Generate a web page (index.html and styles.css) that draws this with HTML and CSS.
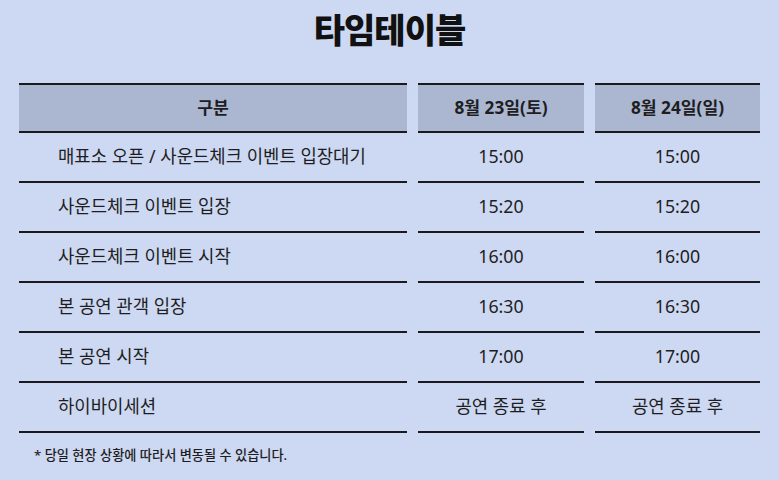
FILE: index.html
```html
<!DOCTYPE html>
<html lang="ko">
<head>
<meta charset="utf-8">
<link rel="stylesheet" href="styles.css">
</head>
<body>
<div class="page">
  <h1 class="title">타임테이블</h1>
  <div class="table">
    <div class="cell head">구분</div>
    <div class="cell head">8월 23일(토)</div>
    <div class="cell head">8월 24일(일)</div>

    <div class="cell label">매표소 오픈 / 사운드체크 이벤트 입장대기</div>
    <div class="cell">15:00</div>
    <div class="cell">15:00</div>

    <div class="cell label">사운드체크 이벤트 입장</div>
    <div class="cell">15:20</div>
    <div class="cell">15:20</div>

    <div class="cell label">사운드체크 이벤트 시작</div>
    <div class="cell">16:00</div>
    <div class="cell">16:00</div>

    <div class="cell label">본 공연 관객 입장</div>
    <div class="cell">16:30</div>
    <div class="cell">16:30</div>

    <div class="cell label">본 공연 시작</div>
    <div class="cell">17:00</div>
    <div class="cell">17:00</div>

    <div class="cell label">하이바이세션</div>
    <div class="cell">공연 종료 후</div>
    <div class="cell">공연 종료 후</div>
  </div>
  <p class="note">* 당일 현장 상황에 따라서 변동될 수 있습니다.</p>
</div>
</body>
</html>
```

FILE: styles.css
```css
html, body {
  margin: 0;
  padding: 0;
  background: #cdd8f2;
}

.page {
  width: 779px;
  height: 480px;
  box-sizing: border-box;
  padding: 0 19px;
  font-family: "Noto Sans", "Noto Sans CJK KR", sans-serif;
  color: #1e1e22;
}

.title {
  margin: 0;
  height: 83px;
  box-sizing: border-box;
  padding-top: 6px;
  text-align: center;
  font-family: "Noto Sans CJK KR", sans-serif;
  font-size: 34px;
  line-height: 46px;
  font-weight: 900;
  letter-spacing: -1px;
  color: #111;
}

.table {
  display: grid;
  grid-template-columns: 388px 166px 165px;
  column-gap: 11px;
}

.cell {
  height: 48px;
  border-bottom: 2px solid #1a1a1e;
  display: flex;
  align-items: center;
  justify-content: center;
  font-size: 17.8px;
  line-height: 1;
}

.cell.head {
  height: 46px;
  border-top: 2px solid #1a1a1e;
  background: #abb6d0;
  font-weight: 700;
  font-size: 17.2px;
}

.cell.label {
  justify-content: flex-start;
  padding-left: 39px;
}

.note {
  margin: 0;
  padding: 14px 0 0 15px;
  font-size: 13.2px;
  line-height: 16px;
  font-weight: 500;
  color: #1e1e22;
}
```
